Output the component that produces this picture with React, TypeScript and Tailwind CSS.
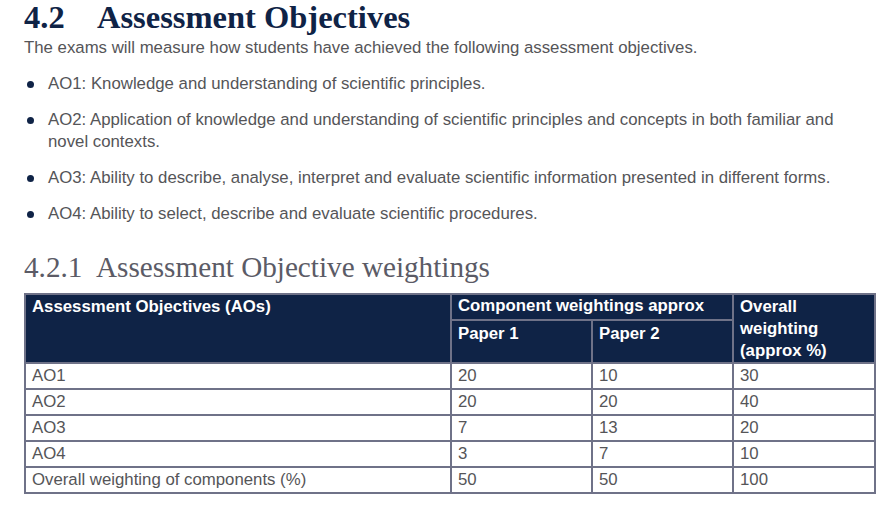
import React from 'react';

const objectives = [
  'AO1: Knowledge and understanding of scientific principles.',
  'AO2: Application of knowledge and understanding of scientific principles and concepts in both familiar and novel contexts.',
  'AO3: Ability to describe, analyse, interpret and evaluate scientific information presented in different forms.',
  'AO4: Ability to select, describe and evaluate scientific procedures.',
];

const rows = [
  ['AO1', '20', '10', '30'],
  ['AO2', '20', '20', '40'],
  ['AO3', '7', '13', '20'],
  ['AO4', '3', '7', '10'],
  ['Overall weighting of components (%)', '50', '50', '100'],
];

const serif = { fontFamily: '"Liberation Serif", "DejaVu Serif", serif' };

export default function App() {
  return (
    <div className="w-[889px] h-[505px] bg-white pl-6 pr-[15px] font-['Liberation_Sans',Arial,sans-serif] text-[16.8px] text-[#555558]">
      <h1 className="flex text-[32.5px] leading-[34px] font-bold text-[#0f2346]" style={serif}>
        <span className="w-[73px]">4.2</span>
        <span>Assessment Objectives</span>
      </h1>
      <p className="mt-[3px] leading-[22px]">
        The exams will measure how students have achieved the following assessment objectives.
      </p>

      <ul className="mt-[1px]">
        {objectives.map((text) => (
          <li key={text} className="flex mt-[14px] leading-[22px]">
            <span className="w-6 shrink-0 flex items-start pt-[8px] pl-[3px]">
              <span className="block w-[7px] h-[7px] rounded-full bg-[#0f2346]" />
            </span>
            <span className="pr-6">{text}</span>
          </li>
        ))}
      </ul>

      <h2 className="flex mt-[27px] text-[29.2px] leading-[30px] text-[#5b5b66]" style={serif}>
        <span className="w-[72px]">4.2.1</span>
        <span>Assessment Objective weightings</span>
      </h2>

      <table className="mt-[11px] w-[850px] border-collapse border-2 border-[#6f7288] table-fixed">
        <colgroup>
          <col className="w-[426px]" />
          <col className="w-[141px]" />
          <col className="w-[141px]" />
          <col className="w-[142px]" />
        </colgroup>
        <thead className="bg-[#0f2346] text-white font-bold">
          <tr>
            <th rowSpan={2} className="border-2 border-[#6f7288] text-left align-top px-[6px] pt-[1px] leading-[22px]">
              Assessment Objectives (AOs)
            </th>
            <th colSpan={2} className="border-2 border-[#6f7288] text-left align-top px-[6px] h-[26px] leading-[22px]">
              Component weightings approx
            </th>
            <th rowSpan={2} className="border-2 border-[#6f7288] text-left align-top px-[6px] pt-[1px] leading-[22px]">
              Overall weighting (approx %)
            </th>
          </tr>
          <tr>
            <th className="border-2 border-[#6f7288] text-left align-top px-[6px] pt-[2px] h-[43px] leading-[22px]">Paper 1</th>
            <th className="border-2 border-[#6f7288] text-left align-top px-[6px] pt-[2px] leading-[22px]">Paper 2</th>
          </tr>
        </thead>
        <tbody>
          {rows.map((r) => (
            <tr key={r[0]} className="h-[26px]">
              {r.map((c, i) => (
                <td key={i} className="border-2 border-[#6f7288] px-[6px] py-0 leading-[22px]">
                  {c}
                </td>
              ))}
            </tr>
          ))}
        </tbody>
      </table>
    </div>
  );
}
